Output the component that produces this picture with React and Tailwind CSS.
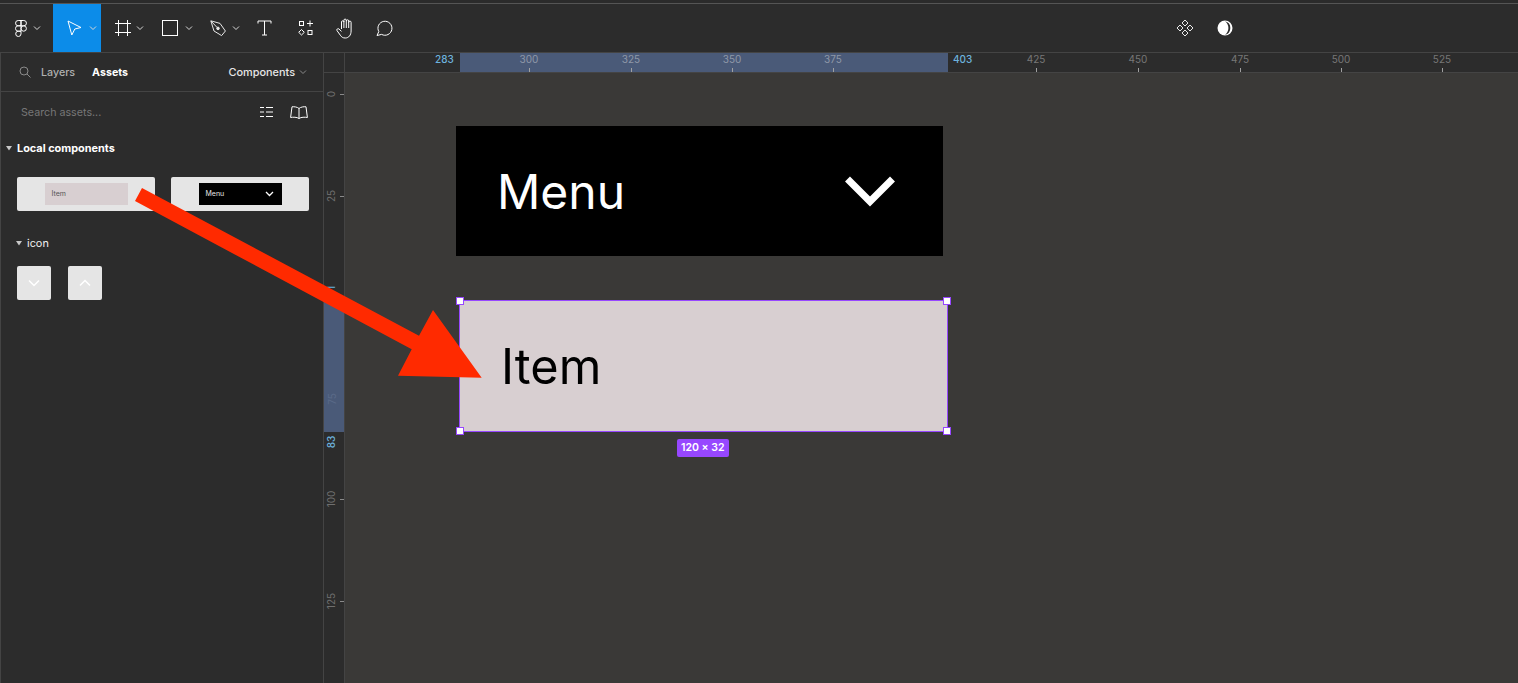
import React from "react";

const Chevron = ({ x = 0, color = "#d8d8d8" }) => (
  <svg width="8" height="6" viewBox="0 0 8 6" fill="none" stroke={color} strokeWidth="1" style={{ marginLeft: x }}>
    <path d="M1 1.5 L4 4.5 L7 1.5" />
  </svg>
);

const Thumb = ({ dark }) => (
  <div className="w-[138px] h-[34px] bg-[#e5e5e5] rounded-[2px] flex items-center justify-center">
    {dark ? (
      <div className="w-[83px] h-[22px] bg-black flex items-center justify-between pl-[7px] pr-[8px] text-[7px] text-[#e6e6e6]">
        <span>Menu</span>
        <svg width="9" height="6" viewBox="0 0 9 6" fill="none" stroke="#fff" strokeWidth="1.3">
          <path d="M1 1 L4.5 4.5 L8 1" />
        </svg>
      </div>
    ) : (
      <div className="w-[83px] h-[22px] bg-[#d8cfd1] flex items-center pl-[7px] text-[7px] text-[#555]">Item</div>
    )}
  </div>
);

const IconThumb = ({ up }) => (
  <div className="w-[34px] h-[34px] bg-[#e5e5e5] rounded-[2px] flex items-center justify-center">
    <svg width="12" height="8" viewBox="0 0 12 8" fill="none" stroke="#fff" strokeWidth="1.5">
      <path d={up ? "M1 6.5 L6 1.5 L11 6.5" : "M1 1.5 L6 6.5 L11 1.5"} />
    </svg>
  </div>
);

const topTicks = [
  [300, 529, 1], [325, 631, 1], [350, 732, 1], [375, 833, 1],
  [425, 1036, 0], [450, 1138, 0], [475, 1240, 0], [500, 1341, 0], [525, 1442, 0],
];
const leftTicks = [[0, 94], [25, 196], [100, 499], [125, 601]];

export default function App() {
  return (
    <div className="w-[1518px] h-[683px] flex flex-col overflow-hidden relative bg-[#2c2c2c] font-['Inter',sans-serif]">
      {/* window strip */}
      <div className="h-[4px] shrink-0 bg-[#2b2b2b] border-b border-[#555555]" />

      {/* toolbar */}
      <div className="h-[49px] shrink-0 flex items-center justify-between border-b border-[#444444]">
        <div className="flex items-center h-full">
          <div className="w-[53px] flex items-center pl-[15px]">
            <svg width="12" height="17" viewBox="0 0 12 17" fill="none" stroke="#fff" strokeWidth="1">
              <path d="M6 .5H3.2a2.6 2.6 0 0 0 0 5.3H6zM6 .5h2.8a2.6 2.6 0 0 1 0 5.3H6zM6 5.8H3.2a2.6 2.6 0 0 0 0 5.4H6zM6 8.5a2.7 2.7 0 1 1 5.4 0 2.7 2.7 0 0 1-5.4 0zM6 11.2H3.2a2.65 2.65 0 1 0 2.8 2.65z" />
            </svg>
            <Chevron x={6} />
          </div>
          <div className="w-[48px] h-full bg-[#0c8ce9] flex items-center pl-[14px]">
            <svg width="15" height="16" viewBox="0 0 15 16" fill="none" stroke="#fff" strokeWidth="1">
              <path d="M1 1 L14 7.5 L7.8 9 L4.8 15 Z" />
            </svg>
            <Chevron x={7} />
          </div>
          <div className="w-[48px] flex items-center pl-[14px]">
            <svg width="16" height="16" viewBox="0 0 16 16" fill="none" stroke="#fff" strokeWidth="1">
              <path d="M3.5 0V16M12.5 0V16M0 3.5H16M0 12.5H16" />
            </svg>
            <Chevron x={5} />
          </div>
          <div className="w-[47px] flex items-center pl-[13px]">
            <svg width="16" height="16" viewBox="0 0 16 16" fill="none" stroke="#fff" strokeWidth="1">
              <rect x=".5" y=".5" width="15" height="15" />
            </svg>
            <Chevron x={7} />
          </div>
          <div className="w-[48px] flex items-center pl-[14px]">
            <svg width="16" height="17" viewBox="0 0 16 17" fill="none" stroke="#e8e8e8" strokeWidth="1">
              <path d="M.8 .8 L10 3.4 L15.4 11 L11.6 15.6 L4 11 Z" />
              <circle cx="8" cy="8.4" r="1.3" fill="#e8e8e8" />
              <path d="M1 1 L7 7.4" />
            </svg>
            <Chevron x={6} />
          </div>
          <div className="w-[50px] flex items-center pl-[13px]">
            <svg width="15" height="16" viewBox="0 0 15 16" fill="none" stroke="#fff" strokeWidth="1">
              <path d="M1 3.5V1H14V3.5M7.5 1V15M5 15H10" />
            </svg>
          </div>
          <div className="w-[39px] flex items-center pl-[4px]">
            <svg width="16" height="16" viewBox="0 0 16 16" fill="none" stroke="#fff" strokeWidth="1">
              <rect x="1.5" y="1.5" width="4" height="4" />
              <path d="M12 .5V6.5M9 3.5H15" />
              <path d="M3.5 9.5 L6.3 12.3 L3.5 15 L.7 12.3 Z" />
              <rect x="10" y="10.5" width="4" height="4" />
            </svg>
          </div>
          <div className="w-[40px] flex items-center pl-[3px]">
            <svg width="19" height="21" viewBox="0 0 19 21" fill="none" stroke="#fff" strokeWidth="1">
              <path d="M5.5 11V4a1.2 1.2 0 0 1 2.4 0V2.3a1.2 1.2 0 0 1 2.4 0V3a1.2 1.2 0 0 1 2.4 0v1.3a1.2 1.2 0 0 1 2.4 0V13c0 4-2.3 7-5.8 7-2.5 0-3.8-1-5-2.8L1 12.6c-.8-1.3 1-2.6 2-1.6l2.5 2.4M7.9 3.5V10M10.3 2.5V10M12.7 4V10" />
            </svg>
          </div>
          <div className="flex items-center pl-[3px]">
            <svg width="18" height="18" viewBox="0 0 18 18" fill="none" stroke="#fff" strokeWidth="1">
              <path d="M1 16.5 L2.8 12.6 A7 7 0 1 1 5.6 15.4 Z" />
            </svg>
          </div>
        </div>
        <div className="flex items-center mr-[285px] gap-[23px]">
          <svg className="-ml-[2px]" width="18" height="18" viewBox="0 0 18 18" fill="none" stroke="#e8e8e8" strokeWidth="1">
            <path d="M9 1 L12 4 L9 7 L6 4 Z M14 6 L17 9 L14 12 L11 9 Z M4 6 L7 9 L4 12 L1 9 Z M9 11 L12 14 L9 17 L6 14 Z" />
          </svg>
          <svg width="16" height="16" viewBox="0 0 16 16">
            <circle cx="8" cy="8" r="7.5" fill="#fff" />
            <path d="M8 1.2 A7 7 0 0 1 8 14.8 A8.5 8.5 0 0 0 8 1.2 Z" fill="#2c2c2c" />
          </svg>
        </div>
      </div>

      <div className="flex flex-1 min-h-0">
        {/* sidebar */}
        <aside className="w-[324px] shrink-0 border-r border-[#444444] border-l border-l-[#444444] text-[11px] leading-[14px]">
          <div className="h-[39px] border-b border-[#444444] flex items-center pl-[18px] pr-[16px]">
            <svg width="12" height="12" viewBox="0 0 12 12" fill="none" stroke="#8a8a8a" strokeWidth="1">
              <circle cx="5" cy="5" r="4" />
              <path d="M8 8 L11.5 11.5" />
            </svg>
            <span className="ml-[10px] mt-[1px] text-[#b0b0b0] font-medium text-[10.7px]">Layers</span>
            <span className="ml-[17px] mt-[1px] text-white font-bold text-[10.7px]">Assets</span>
            <span className="ml-auto text-[#e6e6e6] font-medium text-[10.9px]">Components</span>
            <Chevron x={4} color="#8a8a8a" />
          </div>
          <div className="h-[40px] flex items-center pl-[20px] pr-[15px]">
            <span className="mt-[1px] text-[#777777] text-[10.7px]">Search assets...</span>
            <svg className="ml-auto" width="13" height="12" viewBox="0 0 13 12" fill="none" stroke="#fff" strokeWidth="1">
              <path d="M6 1.5H13M6 6H13M6 10.5H13M0 1.5H4M0 6H4M0 10.5H4" />
            </svg>
            <svg className="ml-[17px]" width="18" height="13" viewBox="0 0 18 13" fill="none" stroke="#fff" strokeWidth="1">
              <path d="M9 2.5C7.5 1 4 .5 2 .8L.6 11.5C3 11 7 11 9 12.5C11 11 15 11 17.4 11.5L16 .8C14 .5 10.500 1 9 2.500ZM9 2.500V12.500" />
            </svg>
          </div>
          <div className="mt-[9px] flex items-center pl-[5px] text-white font-bold text-[10.9px]">
            <svg width="6" height="5" viewBox="0 0 6 5" fill="#c8c8c8"><path d="M0 0H6L3 4.500Z" /></svg>
            <span className="ml-[5px]">Local components</span>
          </div>
          <div className="mt-[22px] pl-[16px] flex gap-[16px]">
            <Thumb />
            <Thumb dark />
          </div>
          <div className="mt-[25px] flex items-center pl-[15px] text-[#f0f0f0] text-[10.9px]">
            <svg width="6" height="5" viewBox="0 0 6 5" fill="#c8c8c8"><path d="M0 0H6L3 4.500Z" /></svg>
            <span className="ml-[5px]">icon</span>
          </div>
          <div className="mt-[16px] pl-[16px] flex gap-[17px]">
            <IconThumb />
            <IconThumb up />
          </div>
        </aside>

        {/* canvas column */}
        <main className="flex-1 flex flex-col min-w-0">
          <div className="h-[20px] shrink-0 flex border-b border-[#444444]">
            <div className="w-[21px] shrink-0 border-r border-[#444444]" />
            <div className="flex-1 relative text-[10px] leading-[12px] text-[#777777]">
              <div className="absolute left-[115px] top-0 w-[488px] h-[19px] bg-[#4a5a78]" />
              <span className="absolute left-[90px] top-0 text-[#6db2dd] font-medium">283</span>
              <span className="absolute left-[608px] top-0 text-[#6db2dd] font-medium">403</span>
              {topTicks.map(([v, x, hl]) => (
                <React.Fragment key={v}>
                  <span className={`absolute top-0 -translate-x-1/2 ${hl ? "text-[#8f98a8]" : "text-[#777777]"}`} style={{ left: x - 345 }}>{v}</span>
                  <span className="absolute top-[15px] w-px h-[4px] bg-[#a0a0a0]" style={{ left: x - 345 }} />
                </React.Fragment>
              ))}
            </div>
          </div>
          <div className="flex-1 flex min-h-0">
            <div className="w-[21px] shrink-0 border-r border-[#444444] relative text-[10px] leading-[12px] text-[#6f6f6f]">
              <div className="absolute left-0 top-[228px] w-[20px] h-[131px] bg-[#4a5a78]" />
              <span className="absolute left-0 top-[320px] w-[16px] h-[12px] text-center -rotate-90 text-[#5a6a88]">75</span>
              <span className="absolute left-0 top-[363px] w-[14px] h-[12px] text-center -rotate-90 text-[#6db2dd] font-medium">83</span>
              <span className="absolute left-0 top-[209px] w-[14px] h-[12px] text-center -rotate-90 text-[#6db2dd] font-medium">1</span>
              {leftTicks.map(([v, y]) => (
                <React.Fragment key={v}>
                  <span className="absolute left-[-3px] w-[20px] h-[12px] text-center -rotate-90" style={{ top: y - 72 - 7 }}>{v}</span>
                  <span className="absolute left-[16px] h-px w-[4px] bg-[#8a8a8a]" style={{ top: y - 73 }} />
                </React.Fragment>
              ))}
            </div>
            <div className="flex-1 relative bg-[#3a3937]">
              <div className="absolute left-[111px] top-[53px] w-[487px] h-[130px] bg-black flex items-center justify-between pl-[41px] pr-[48px] text-white text-[48px] leading-none">
                <span className="mt-[2px]">Menu</span>
                <svg className="mt-[2px]" width="50" height="32" viewBox="0 0 50 32" fill="none" stroke="#fff" strokeWidth="7">
                  <path d="M2.500 3 L25 25.500 L47.500 3" />
                </svg>
              </div>
              <div className="absolute left-[114px] top-[227px] w-[489px] h-[132px] bg-[#d8cfd1] border border-[#9747ff] flex items-center pl-[41px] text-black text-[48.7px] leading-none">
                <span className="mt-[3px]">Item</span>
              </div>
              {[[111, 224], [598, 224], [111, 354], [598, 354]].map(([x, y]) => (
                <span key={`${x}-${y}`} className="absolute w-[8px] h-[8px] bg-white border border-[#9747ff]" style={{ left: x, top: y }} />
              ))}
              <div className="absolute left-[332px] top-[366px] h-[18px] px-[4px] rounded-[2px] bg-[#9747ff] text-white text-[10.500px] font-semibold leading-[18px] whitespace-nowrap">120 × 32</div>
            </div>
          </div>
        </main>
      </div>

      {/* red annotation arrow */}
      <svg className="absolute left-0 top-0 pointer-events-none" width="1518" height="683" viewBox="0 0 1518 683">
        <polygon points="142,188 419,335.700 433,310 481.700,377.700 398,375.700 411.700,349.300 135,201" fill="#ff2a00" />
      </svg>
    </div>
  );
}
